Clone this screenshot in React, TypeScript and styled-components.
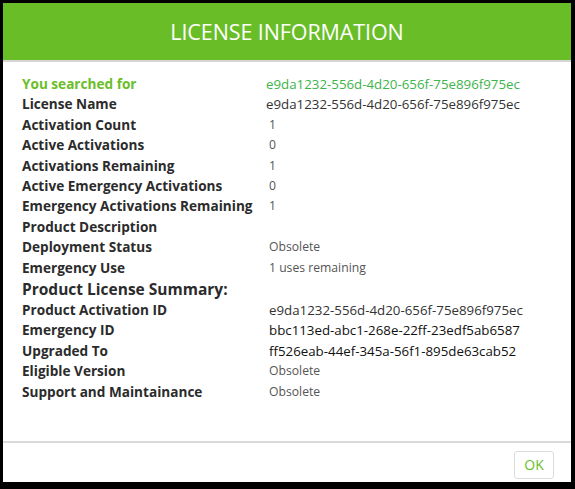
import { Fragment } from "react";
import styled, { createGlobalStyle } from "styled-components";

const GlobalStyle = createGlobalStyle`
  html, body {
    margin: 0;
    padding: 0;
    background: #000;
  }
  body {
    font-family: "Open Sans", "Liberation Sans", sans-serif;
  }
`;

const Frame = styled.div`
  width: 575px;
  height: 489px;
  box-sizing: border-box;
  padding: 3px 4px 7px 3px;
  background: #000;
`;

const Dialog = styled.div`
  height: 100%;
  display: flex;
  flex-direction: column;
  background: #fff;
`;

const Header = styled.div`
  height: 57px;
  flex: none;
  background: #69be28;
  border-bottom: 2px solid #d6d6d6;
  display: flex;
  align-items: center;
  justify-content: center;
  color: #fff;
  font-size: 21.5px;
  letter-spacing: -0.1px;
`;

const Body = styled.div`
  flex: 1;
  padding: 12px 0 0 19px;
  display: grid;
  grid-template-columns: 244px 1fr;
  align-content: start;
`;

const Label = styled.div<{ $green?: boolean; $big?: boolean }>`
  font-weight: 700;
  font-size: ${(p) => (p.$big ? "15.5px" : "13.6px")};
  line-height: ${(p) => (p.$big ? "22px" : "20.4px")};
  color: ${(p) => (p.$green ? "#69be28" : "#2b2b2b")};
  white-space: nowrap;
`;

const Value = styled.div<{ $tone?: "green" | "dark" | "black" | "muted"; $pad?: number }>`
  line-height: 20.4px;
  white-space: nowrap;
  padding-left: ${(p) => p.$pad ?? 3}px;
  font-size: ${(p) => (p.$tone === "muted" || !p.$tone ? "12.2px" : "13.3px")};
  color: ${(p) =>
    p.$tone === "green"
      ? "#3db54a"
      : p.$tone === "dark"
      ? "#333"
      : p.$tone === "black"
      ? "#111"
      : "#555"};
`;

const Footer = styled.div`
  height: 39px;
  flex: none;
  border-top: 2px solid #dadada;
  display: flex;
  align-items: center;
  justify-content: flex-end;
  padding-right: 17px;
`;

const OkButton = styled.button`
  width: 40px;
  height: 28px;
  margin-top: 4px;
  background: #fff;
  border: 1px solid #dcdcdc;
  border-radius: 3px;
  color: #69be28;
  font-family: "Open Sans", "Liberation Sans", sans-serif;
  font-size: 14px;
  padding: 0;
`;

type Row = { label: string; value?: string; tone?: "green" | "dark" | "black" | "muted"; pad?: number; green?: boolean; big?: boolean };

const rows: Row[] = [
  { label: "You searched for", value: "e9da1232-556d-4d20-656f-75e896f975ec", tone: "green", green: true, pad: 0 },
  { label: "License Name", value: "e9da1232-556d-4d20-656f-75e896f975ec", tone: "dark", pad: 0 },
  { label: "Activation Count", value: "1" },
  { label: "Active Activations", value: "0" },
  { label: "Activations Remaining", value: "1" },
  { label: "Active Emergency Activations", value: "0" },
  { label: "Emergency Activations Remaining", value: "1" },
  { label: "Product Description", value: "" },
  { label: "Deployment Status", value: "Obsolete" },
  { label: "Emergency Use", value: "1 uses remaining" },
  { label: "Product License Summary:", big: true },
  { label: "Product Activation ID", value: "e9da1232-556d-4d20-656f-75e896f975ec", tone: "dark" },
  { label: "Emergency ID", value: "bbc113ed-abc1-268e-22ff-23edf5ab6587", tone: "black" },
  { label: "Upgraded To", value: "ff526eab-44ef-345a-56f1-895de63cab52", tone: "black" },
  { label: "Eligible Version", value: "Obsolete" },
  { label: "Support and Maintainance", value: "Obsolete" },
];

export default function App() {
  return (
    <Frame>
      <GlobalStyle />
      <Dialog>
        <Header>LICENSE INFORMATION</Header>
        <Body>
          {rows.map((r) => (
            <Fragment key={r.label}>
              <Label $green={r.green} $big={r.big}>
                {r.label}
              </Label>
              <Value $tone={r.tone} $pad={r.pad}>{r.value}</Value>
            </Fragment>
          ))}
        </Body>
        <Footer>
          <OkButton>OK</OkButton>
        </Footer>
      </Dialog>
    </Frame>
  );
}
